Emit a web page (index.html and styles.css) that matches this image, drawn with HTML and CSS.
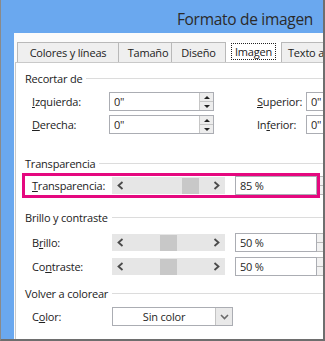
FILE: index.html
```html
<!DOCTYPE html>
<html>
<head>
	<title>Formato de imagen</title>
	<meta charset="UTF-8">
	<link rel="stylesheet" href="styles.css">
</head>
<body>
	<div class="window">
		<div class="titlebar"><span class="title">Formato de imagen</span></div>
		<div class="client">
			<div class="tabs">
				<div class="tab tab-colores">Colores y líneas</div>
				<div class="tab tab-tamano">Tamaño</div>
				<div class="tab tab-diseno">Diseño</div>
				<div class="tab tab-imagen selected"><span class="focus">Imagen</span></div>
				<div class="tab tab-texto">Texto alternativo</div>
			</div>
			<div class="panel">
				<div class="section">Recortar de</div>
				<div class="crop-grid">
					<span class="label"><u>I</u>zquierda:</span>
					<div class="field"><span class="value">0"</span><div class="spin"><span class="up"></span><span class="down"></span></div></div>
					<span class="label"><u>S</u>uperior:</span>
					<div class="field"><span class="value">0"</span></div>
					<span class="label"><u>D</u>erecha:</span>
					<div class="field"><span class="value">0"</span><div class="spin"><span class="up"></span><span class="down"></span></div></div>
					<span class="label">In<u>f</u>erior:</span>
					<div class="field"><span class="value">0"</span></div>
				</div>

				<div class="section sec-trans">Transparencia</div>
				<div class="srow highlight">
					<span class="label slabel"><u>T</u>ransparencia:</span>
					<div class="slider">
						<span class="arrow"><svg width="7" height="9" viewBox="0 0 7 9"><polyline points="5.5,1 1.5,4.5 5.5,8" fill="none" stroke="#4a4a4a" stroke-width="1.8"/></svg></span>
						<div class="track"><span class="thumb" style="--pos:85"></span></div>
						<span class="arrow"><svg width="7" height="9" viewBox="0 0 7 9"><polyline points="1.5,1 5.5,4.5 1.5,8" fill="none" stroke="#4a4a4a" stroke-width="1.8"/></svg></span>
					</div>
					<div class="num"><span class="value">85 %</span></div>
					<div class="numspin"></div>
				</div>

				<div class="section sec-brillo">Brillo y contraste</div>
				<div class="srow row-brillo">
					<span class="label slabel">B<u>r</u>illo:</span>
					<div class="slider">
						<span class="arrow"><svg width="7" height="9" viewBox="0 0 7 9"><polyline points="5.5,1 1.5,4.5 5.5,8" fill="none" stroke="#4a4a4a" stroke-width="1.8"/></svg></span>
						<div class="track"><span class="thumb" style="--pos:50"></span></div>
						<span class="arrow"><svg width="7" height="9" viewBox="0 0 7 9"><polyline points="1.5,1 5.5,4.5 1.5,8" fill="none" stroke="#4a4a4a" stroke-width="1.8"/></svg></span>
					</div>
					<div class="num"><span class="value">50 %</span></div>
					<div class="numspin"></div>
				</div>
				<div class="srow row-contraste">
					<span class="label slabel">Co<u>n</u>traste:</span>
					<div class="slider">
						<span class="arrow"><svg width="7" height="9" viewBox="0 0 7 9"><polyline points="5.5,1 1.5,4.5 5.5,8" fill="none" stroke="#4a4a4a" stroke-width="1.8"/></svg></span>
						<div class="track"><span class="thumb" style="--pos:50"></span></div>
						<span class="arrow"><svg width="7" height="9" viewBox="0 0 7 9"><polyline points="1.5,1 5.5,4.5 1.5,8" fill="none" stroke="#4a4a4a" stroke-width="1.8"/></svg></span>
					</div>
					<div class="num"><span class="value">50 %</span></div>
					<div class="numspin"></div>
				</div>

				<div class="section sec-color">Volver a colorear</div>
				<div class="srow row-color">
					<span class="label slabel">C<u>o</u>lor:</span>
					<div class="combo">
						<span class="combo-text">Sin color</span>
						<span class="combo-btn"><svg width="9" height="6" viewBox="0 0 9 6"><polyline points="1,1 4.5,4.5 8,1" fill="none" stroke="#6b6b6b" stroke-width="1.6"/></svg></span>
					</div>
				</div>
			</div>
		</div>
	</div>
</body>
</html>
```

FILE: styles.css
```css
body {
	margin: 0;
	padding: 0;
	background-color: #fff;
	color: #1f1f1f;
	font-family: "Open Sans", "Noto Sans", sans-serif;
	font-size: 11px;
	letter-spacing: -0.2px;
}

.window {
	width: 325px;
	height: 341px;
	box-sizing: border-box;
	background-color: #6aa8ef;
	border-left: 1px solid #8a8a8a;
	border-right: 2px solid #6e6e6e;
	border-bottom: 2px solid #6e6e6e;
	display: flex;
	flex-direction: column;
	overflow: hidden;
}

.titlebar {
	height: 33px;
	flex: none;
	display: flex;
	align-items: center;
	justify-content: flex-end;
	padding-right: 10px;
}

.title {
	font-size: 15.5px;
	letter-spacing: -0.3px;
	color: #2a2a2a;
	padding-top: 5px;
}

.client {
	flex: 1;
	margin-left: 13px;
	background-color: #fbfbfb;
	padding-top: 9px;
	display: flex;
	flex-direction: column;
	min-height: 0;
}

/* tabs */
.tabs {
	display: flex;
	align-items: flex-end;
	padding-left: 3px;
	height: 20px;
	flex: none;
	position: relative;
	z-index: 1;
	overflow: hidden;
}

.tab {
	flex: none;
	box-sizing: border-box;
	height: 20px;
	background-color: #efefef;
	border: 1px solid #b9b9b9;
	border-bottom: none;
	border-right: none;
	display: flex;
	align-items: center;
	justify-content: center;
	white-space: nowrap;
	color: #222;
}

.tab-colores { width: 101px; }
.tab-tamano { width: 53px; padding-left: 6px; }
.tab-diseno { width: 54px; }
.tab-imagen { width: 57px; }
.tab-texto { width: 60px; justify-content: flex-start; padding-left: 6px; }

.tab.selected {
	height: 23px;
	margin-bottom: -1px;
	background-color: #fff;
	border-right: 1px solid #b9b9b9;
	padding-bottom: 1px;
}

.tab-imagen + .tab {
	border-left: none;
}

.focus {
	border: 1px dotted #222;
	padding: 0 3px;
	line-height: 15px;
}

/* panel */
.panel {
	flex: 1;
	margin-left: 1px;
	background-color: #fff;
	border-left: 1px solid #c9c9c9;
	border-top: 1px solid #c9c9c9;
	padding: 7px 0 0 9px;
	overflow: hidden;
	min-height: 0;
}

.section {
	display: flex;
	align-items: center;
	gap: 4px;
	height: 16px;
	white-space: nowrap;
	color: #222;
}

.section::after {
	content: "";
	flex: 1;
	height: 1px;
	background-color: #dcdcdc;
}

.label {
	white-space: nowrap;
	color: #222;
}

.crop-grid {
	display: grid;
	grid-template-columns: 77px 148px 49px 40px;
	row-gap: 4px;
	margin-top: 6px;
	padding-left: 7px;
	align-items: center;
}

.crop-grid .field:nth-child(2),
.crop-grid .field:nth-child(6) {
	margin-right: 43px;
}

.field {
	height: 19px;
	box-sizing: border-box;
	border: 1px solid #abadb3;
	background-color: #fff;
	display: flex;
	align-items: center;
	justify-content: space-between;
}

.value {
	padding-left: 4px;
	color: #2b2418;
}

.spin {
	width: 14px;
	height: 17px;
	box-sizing: border-box;
	border-left: 1px solid #c6c6c6;
	background-color: #ededed;
	display: flex;
	flex-direction: column;
}

.spin span {
	flex: 1;
	display: flex;
	align-items: center;
	justify-content: center;
}

.spin .up {
	border-bottom: 1px solid #c6c6c6;
}

.spin .up::before {
	content: "";
	border-left: 3px solid transparent;
	border-right: 3px solid transparent;
	border-bottom: 3px solid #222;
}

.spin .down::before {
	content: "";
	border-left: 3px solid transparent;
	border-right: 3px solid transparent;
	border-top: 3px solid #222;
}

/* slider rows */
.srow {
	display: flex;
	align-items: center;
	width: 292px;
	box-sizing: border-box;
	height: 19px;
	padding-left: 7px;
}

.srow > * {
	flex: none;
}

.slabel {
	width: 80px;
}

.highlight {
	margin-top: 5px;
	outline: 3px solid #e5087f;
}

.sec-trans { margin-top: 21px; }
.sec-brillo { margin-top: 14px; }
.row-brillo { margin-top: 8px; }
.row-contraste { margin-top: 5px; }
.sec-color { margin-top: 9px; }
.row-color { margin-top: 6px; }

.slider {
	width: 113px;
	height: 17px;
	background-color: #e6e6e6;
	display: flex;
	align-items: center;
}

.arrow {
	width: 17px;
	height: 17px;
	display: flex;
	align-items: center;
	justify-content: center;
	flex: none;
}

.track {
	flex: 1;
	height: 17px;
	display: flex;
	align-items: center;
}

.thumb {
	width: 17px;
	height: 16px;
	background-color: #c8c8c8;
	margin-left: calc((100% - 17px) * var(--pos) / 100);
}

.num {
	margin-left: 10px;
	width: 82px;
	height: 19px;
	box-sizing: border-box;
	border: 1px solid #abadb3;
	display: flex;
	align-items: center;
}

.num .value {
	color: #1f1f1f;
}

.numspin {
	width: 15px;
	height: 19px;
	box-sizing: border-box;
	border: 1px solid #b9b9b9;
	border-left: none;
	background: linear-gradient(#f2f2f2 0 8px, #b9b9b9 8px 9px, #f2f2f2 9px);
}

.combo {
	width: 121px;
	height: 19px;
	box-sizing: border-box;
	border: 1px solid #abadb3;
	display: flex;
}

.combo-text {
	flex: 1;
	display: flex;
	align-items: center;
	justify-content: center;
	color: #1f1f1f;
}

.combo-btn {
	width: 17px;
	box-sizing: border-box;
	border-left: 1px solid #c3c3c3;
	background-color: #e9e9e9;
	display: flex;
	align-items: center;
	justify-content: center;
}
```
